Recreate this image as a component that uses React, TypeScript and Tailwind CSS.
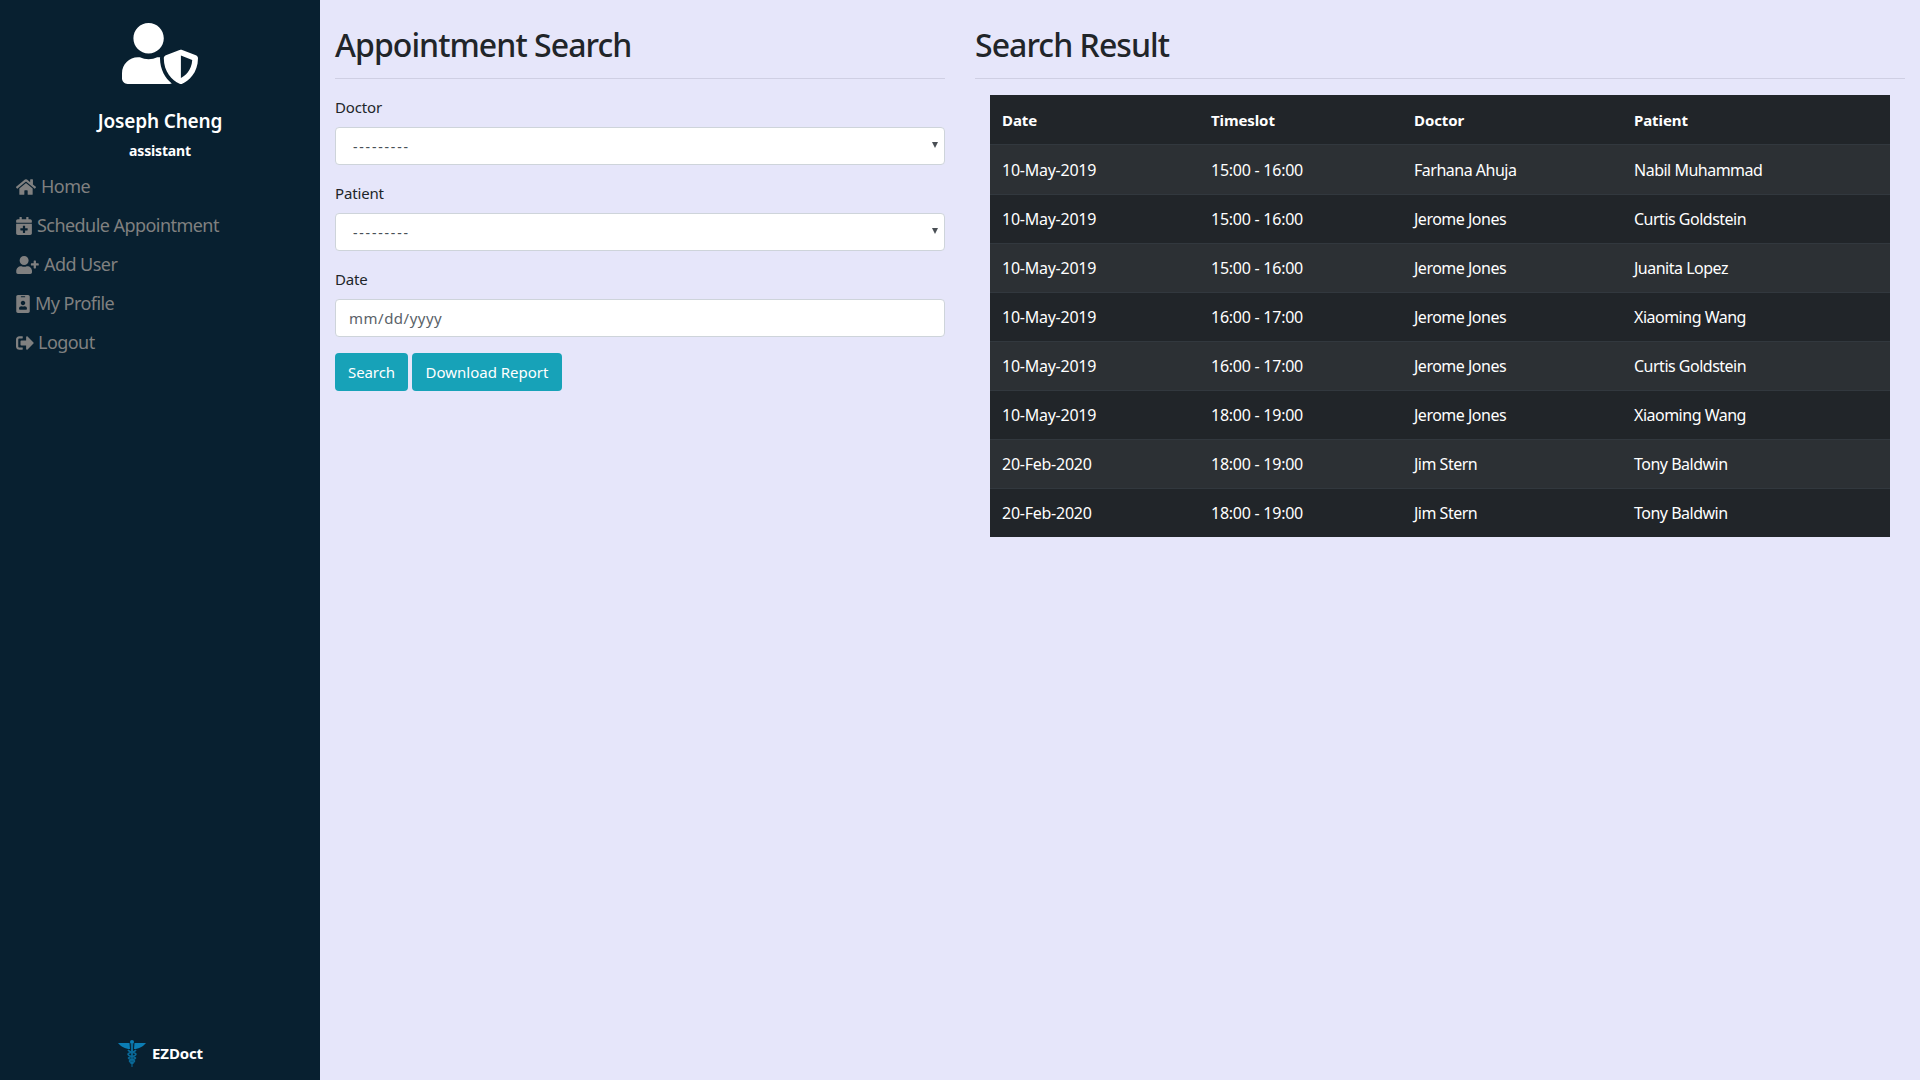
import { FaHome, FaCalendarPlus, FaUserPlus, FaIdBadge, FaSignOutAlt, FaUserShield } from "react-icons/fa";

const nav = [
  { icon: FaHome, w: "w-[20px]", label: "Home", gap: "ml-[5px]" },
  { icon: FaCalendarPlus, w: "w-[16px]", label: "Schedule Appointment", gap: "ml-[5px]" },
  { icon: FaUserPlus, w: "w-[23px]", label: "Add User", gap: "ml-[5px]" },
  { icon: FaIdBadge, w: "w-[14px]", label: "My Profile", gap: "ml-[5px]" },
  { icon: FaSignOutAlt, w: "w-[18px]", label: "Logout", gap: "ml-[4px]" },
];
const rows = [
  ["10-May-2019", "15:00 - 16:00", "Farhana Ahuja", "Nabil Muhammad"],
  ["10-May-2019", "15:00 - 16:00", "Jerome Jones", "Curtis Goldstein"],
  ["10-May-2019", "15:00 - 16:00", "Jerome Jones", "Juanita Lopez"],
  ["10-May-2019", "16:00 - 17:00", "Jerome Jones", "Xiaoming Wang"],
  ["10-May-2019", "16:00 - 17:00", "Jerome Jones", "Curtis Goldstein"],
  ["10-May-2019", "18:00 - 19:00", "Jerome Jones", "Xiaoming Wang"],
  ["20-Feb-2020", "18:00 - 19:00", "Jim Stern", "Tony Baldwin"],
  ["20-Feb-2020", "18:00 - 19:00", "Jim Stern", "Tony Baldwin"],
];

function Caduceus() {
  return (
    <svg width="30" height="27" viewBox="0 0 30 27" className="block">
      <path d="M1 3 H12.5 L13 9 C8 9 4 6.5 1 3Z" fill="#0b7db4" />
      <path d="M29 3 H17.5 L17 9 C22 9 26 6.5 29 3Z" fill="#0b7db4" />
      <circle cx="15" cy="2" r="2" fill="#0b7db4" />
      <path d="M13.8 4 H16.2 L15.5 27 H14.5Z" fill="#0a6a99" />
      <path d="M11 10 C13 13 18 12 19 14 C19 17 12 16 11.5 18 C12 20 17 19 17.5 21 C17 23 14 22 14 24" stroke="#0a6a99" strokeWidth="1.6" fill="none" />
      <path d="M19 10 C17 13 12 12 11 14 C11 17 18 16 18.5 18 C18 20 13 19 12.5 21 C13 23 16 22 16 24" stroke="#0a6a99" strokeWidth="1.6" fill="none" />
    </svg>
  );
}

function SelectField({ label }: { label: string }) {
  return (
    <div className="mb-4">
      <label className="block h-6 mb-2 text-[15px] leading-6 tracking-[-0.15px] text-[#212529]">{label}</label>
      <div className="relative">
        <select className="block w-full h-[38px] appearance-none bg-white border border-[#ced4da] rounded pl-[17px] pr-3 pt-[1px] text-[14px] tracking-[1.8px] text-[#495057] outline-none">
          <option>---------</option>
        </select>
        <span className="absolute right-[7px] top-[15px] w-0 h-0 border-l-[3px] border-r-[3px] border-t-[6px] border-l-transparent border-r-transparent border-t-[#4a4f55]" />
      </div>
    </div>
  );
}

export default function App() {
  return (
    <div className="flex h-[1080px] w-full overflow-hidden bg-[#e6e6fa] font-['Noto_Sans',sans-serif] text-[#212529]">
      <aside className="flex h-full w-[320px] shrink-0 flex-col bg-[#082030]">
        <div className="flex flex-col items-center pt-[23px]">
          <FaUserShield className="h-[61px] w-[76px] text-white" />
          <div className="mt-[22px] text-[19px] leading-[30px] font-semibold tracking-[-0.15px] text-white">Joseph Cheng</div>
          <div className="mt-[3px] text-[14px] leading-[24px] font-bold tracking-[-0.15px] text-white">assistant</div>
        </div>
        <nav className="mt-[4px] flex flex-col">
          {nav.map(({ icon: Icon, w, label, gap }) => (
            <a key={label} className="flex h-[39px] items-center pl-4 text-[18px] tracking-[-0.55px] text-[#808080]">
              <Icon className={`${w} h-[18px] shrink-0`} />
              <span className={gap}>{label}</span>
            </a>
          ))}
        </nav>
        <div className="mt-auto flex items-center justify-center pb-[13px]">
          <Caduceus />
          <span className="ml-[5px] text-[15px] font-bold tracking-[-0.15px] text-white">EZDoct</span>
        </div>
      </aside>
      <main className="flex min-w-0 flex-1 items-start">
        <section className="w-[640px] shrink-0 px-[15px]">
          <h2 className="mt-[26px] h-[38px] text-[32px] leading-[38px] font-medium tracking-[-0.95px] text-[#212529]">Appointment Search</h2>
          <hr className="mt-[14px] mb-4 border-t border-[#cfcfe3]" />
          <SelectField label="Doctor" />
          <SelectField label="Patient" />
          <div className="mb-4">
            <label className="block h-6 mb-2 text-[15px] leading-6 tracking-[-0.15px]">Date</label>
            <input placeholder="mm/dd/yyyy" className="block h-[38px] w-full rounded border border-[#ced4da] bg-white px-[13px] text-[15px] tracking-[0.5px] outline-none placeholder:text-[#5a6268]" />
          </div>
          <div className="flex gap-1">
            <button className="h-[38px] w-[73px] rounded bg-[#17a2b8] text-[15px] tracking-[-0.1px] text-white">Search</button>
            <button className="h-[38px] w-[150px] rounded bg-[#17a2b8] text-[15px] tracking-[0px] text-white">Download Report</button>
          </div>
        </section>
        <section className="min-w-0 flex-1 px-[15px]">
          <h2 className="mt-[26px] h-[38px] text-[32px] leading-[38px] font-medium tracking-[-0.95px]">Search Result</h2>
          <hr className="mt-[14px] mb-4 border-t border-[#cfcfe3]" />
          <div className="px-[15px]">
            <table className="w-[900px] table-fixed border-collapse bg-[#212529] text-[16px] tracking-[-0.5px] text-white">
              <thead>
                <tr className="h-[49px] text-left text-[15px] tracking-[-0.1px]">
                  <th className="w-[209px] pl-3 pt-[1px] font-bold">Date</th>
                  <th className="w-[203px] pl-3 pt-[1px] font-bold">Timeslot</th>
                  <th className="w-[220px] pl-3 pt-[1px] font-bold">Doctor</th>
                  <th className="pl-3 pt-[1px] font-bold">Patient</th>
                </tr>
              </thead>
              <tbody>
                {rows.map((r, i) => (
                  <tr key={i} className={`${i === 0 ? "h-[50px]" : "h-[49px]"} border-t border-[#32383e] ${i % 2 === 0 ? "bg-[#2c3034]" : ""}`}>
                    {r.map((c, j) => (
                      <td key={j} className={`pl-3 ${i === 0 ? "pt-[2px]" : ""} ${j < 2 ? "tracking-[-0.25px]" : ""}`}>{c}</td>
                    ))}
                  </tr>
                ))}
              </tbody>
            </table>
          </div>
        </section>
      </main>
    </div>
  );
}
